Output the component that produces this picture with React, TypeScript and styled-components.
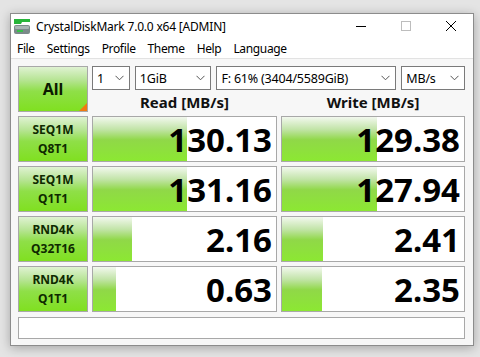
import styled, { createGlobalStyle } from "styled-components";

const Global = createGlobalStyle`
  html, body {
    margin: 0;
    padding: 0;
    background: #e4e4e4;
  }
  body {
    font-family: "Noto Sans", "Open Sans", sans-serif;
    width: 480px;
    height: 357px;
    overflow: hidden;
  }
`;

const Page = styled.div`
  padding: 13px 0 0 10px;
`;

const Window = styled.div`
  width: 462px;
  height: 331px;
  border: 1px solid #8c8c8c;
  background: #f7f7f7;
  box-shadow: 0 2px 10px rgba(0, 0, 0, 0.28);
  display: flex;
  flex-direction: column;
`;

const TitleBar = styled.div`
  flex-shrink: 0;
  height: 24px;
  background: #ffffff;
  display: flex;
  align-items: center;
  padding-left: 2px;
  font-size: 12px;
  color: #000;
`;

const Title = styled.span`
  margin-left: 5px;
  letter-spacing: -0.2px;
`;

const Controls = styled.div`
  margin-left: auto;
  display: flex;
  height: 100%;
`;

const Ctrl = styled.div`
  width: 45px;
  height: 100%;
  display: flex;
  align-items: center;
  justify-content: center;
`;

const MenuBar = styled.div`
  flex-shrink: 0;
  height: 20px;
  background: #ffffff;
  border-bottom: 1px solid #e2e2e2;
  display: flex;
  align-items: center;
  padding-left: 6px;
  gap: 12px;
  font-size: 12px;
`;

const MenuItem = styled.span`
  letter-spacing: -0.35px;
`;

const Body = styled.div`
  padding: 7px 8px 0 7px;
  display: grid;
  grid-template-columns: 70px 185px 184px;
  grid-template-rows: repeat(5, 46px) 23px;
  column-gap: 4px;
  row-gap: 4px;
`;

const greenGrad = `linear-gradient(to bottom, #dff2d2 0%, #b6e493 30%, #8fdf48 55%, #80e020 100%)`;

const AllButton = styled.div`
  position: relative;
  border: 1px solid #a8a8a8;
  background: ${greenGrad};
  display: flex;
  align-items: center;
  justify-content: center;
  font-weight: 700;
  font-size: 16px;
  color: #0c1a00;
  box-sizing: border-box;
  &::after {
    content: "";
    position: absolute;
    right: 0;
    bottom: 0;
    border-style: solid;
    border-width: 0 0 8px 8px;
    border-color: transparent transparent #f07b10 transparent;
  }
`;

const TopRight = styled.div`
  grid-column: 2 / 4;
  display: flex;
  flex-direction: column;
`;

const SelectRow = styled.div`
  display: flex;
  gap: 5px;
  height: 24px;
`;

const Select = styled.div<{ $w: number }>`
  width: ${(p) => p.$w}px;
  box-sizing: border-box;
  border: 1px solid #7a7a7a;
  background: #fff;
  display: flex;
  align-items: center;
  padding: 0 5px 0 4px;
  font-size: 12.5px;
  white-space: nowrap;
  overflow: hidden;
`;

const SelectText = styled.span`
  flex: 1;
  letter-spacing: -0.2px;
`;

const Headers = styled.div`
  display: grid;
  grid-template-columns: 185px 184px;
  column-gap: 4px;
  flex: 1;
  align-items: end;
`;

const Header = styled.div`
  text-align: center;
  font-weight: 700;
  font-size: 15px;
  line-height: 19px;
  color: #111;
`;

const Label = styled.div`
  border: 1px solid #a8a8a8;
  background: ${greenGrad};
  box-sizing: border-box;
  display: flex;
  flex-direction: column;
  align-items: center;
  justify-content: center;
  font-weight: 700;
  font-size: 12px;
  line-height: 19px;
  color: #0f2a00;
`;

const Cell = styled.div`
  position: relative;
  border: 1px solid #a8a8a8;
  background: #fff;
  box-sizing: border-box;
  display: flex;
  align-items: center;
  justify-content: flex-end;
  padding-right: 4px;
  overflow: hidden;
`;

const Bar = styled.div`
  position: absolute;
  left: 0;
  top: 0;
  bottom: 0;
  background: linear-gradient(to bottom, #f2f8ee 0%, #c2e4a8 28%, #90d848 52%, #8ce832 100%);
`;

const Value = styled.span`
  position: relative;
  font-weight: 700;
  font-size: 33px;
  line-height: 1;
  color: #000;
  letter-spacing: 0px;
`;

const Status = styled.div`
  grid-column: 1 / 4;
  margin-top: 1px;
  border: 1px solid #a8a8a8;
  background: #fff;
  box-sizing: border-box;
`;

const Chevron = () => (
  <svg width="9" height="6" viewBox="0 0 9 6">
    <path d="M0.5 0.8 L4.5 4.8 L8.5 0.8" fill="none" stroke="#555" strokeWidth="1" />
  </svg>
);

const AppIcon = () => (
  <svg width="18" height="17" viewBox="0 0 18 17">
    <path d="M1 1 H17 V4 H9 L8 6 H1 Z" fill="#27b43a" />
    <rect x="1" y="7" width="16" height="9" rx="2" fill="#7b8a8a" />
    <rect x="2" y="8" width="14" height="3" rx="1" fill="#a8b4b4" />
    <rect x="4" y="12" width="6" height="2" fill="#37c04a" />
  </svg>
);

const rows = [
  { a: "SEQ1M", b: "Q8T1", r: "130.13", rw: 94, w: "129.38", ww: 95 },
  { a: "SEQ1M", b: "Q1T1", r: "131.16", rw: 94, w: "127.94", ww: 95 },
  { a: "RND4K", b: "Q32T16", r: "2.16", rw: 39, w: "2.41", ww: 41 },
  { a: "RND4K", b: "Q1T1", r: "0.63", rw: 23, w: "2.35", ww: 40 },
];

export default function App() {
  return (
    <>
      <Global />
      <Page>
        <Window>
          <TitleBar>
            <AppIcon />
            <Title>CrystalDiskMark 7.0.0 x64 [ADMIN]</Title>
            <Controls>
              <Ctrl>
                <svg width="10" height="10" viewBox="0 0 10 10">
                  <path d="M0 5.5 H10" stroke="#000" strokeWidth="1" />
                </svg>
              </Ctrl>
              <Ctrl>
                <svg width="10" height="10" viewBox="0 0 10 10">
                  <rect x="0.5" y="0.5" width="9" height="9" fill="none" stroke="#bdbdbd" strokeWidth="1" />
                </svg>
              </Ctrl>
              <Ctrl>
                <svg width="10" height="10" viewBox="0 0 10 10">
                  <path d="M0 0 L10 10 M10 0 L0 10" stroke="#000" strokeWidth="1" />
                </svg>
              </Ctrl>
            </Controls>
          </TitleBar>
          <MenuBar>
            <MenuItem>File</MenuItem>
            <MenuItem>Settings</MenuItem>
            <MenuItem>Profile</MenuItem>
            <MenuItem>Theme</MenuItem>
            <MenuItem>Help</MenuItem>
            <MenuItem>Language</MenuItem>
          </MenuBar>
          <Body>
            <AllButton>All</AllButton>
            <TopRight>
              <SelectRow>
                <Select $w={38}>
                  <SelectText>1</SelectText>
                  <Chevron />
                </Select>
                <Select $w={77}>
                  <SelectText>1GiB</SelectText>
                  <Chevron />
                </Select>
                <Select $w={181}>
                  <SelectText>F: 61% (3404/5589GiB)</SelectText>
                  <Chevron />
                </Select>
                <Select $w={64}>
                  <SelectText>MB/s</SelectText>
                  <Chevron />
                </Select>
              </SelectRow>
              <Headers>
                <Header>Read [MB/s]</Header>
                <Header>Write [MB/s]</Header>
              </Headers>
            </TopRight>
            {rows.map((row, i) => (
              <Row key={i} {...row} />
            ))}
            <Status />
          </Body>
        </Window>
      </Page>
    </>
  );
}

function Row(props: { a: string; b: string; r: string; rw: number; w: string; ww: number }) {
  return (
    <>
      <Label>
        <span>{props.a}</span>
        <span>{props.b}</span>
      </Label>
      <Cell>
        <Bar style={{ width: props.rw }} />
        <Value>{props.r}</Value>
      </Cell>
      <Cell>
        <Bar style={{ width: props.ww }} />
        <Value>{props.w}</Value>
      </Cell>
    </>
  );
}
